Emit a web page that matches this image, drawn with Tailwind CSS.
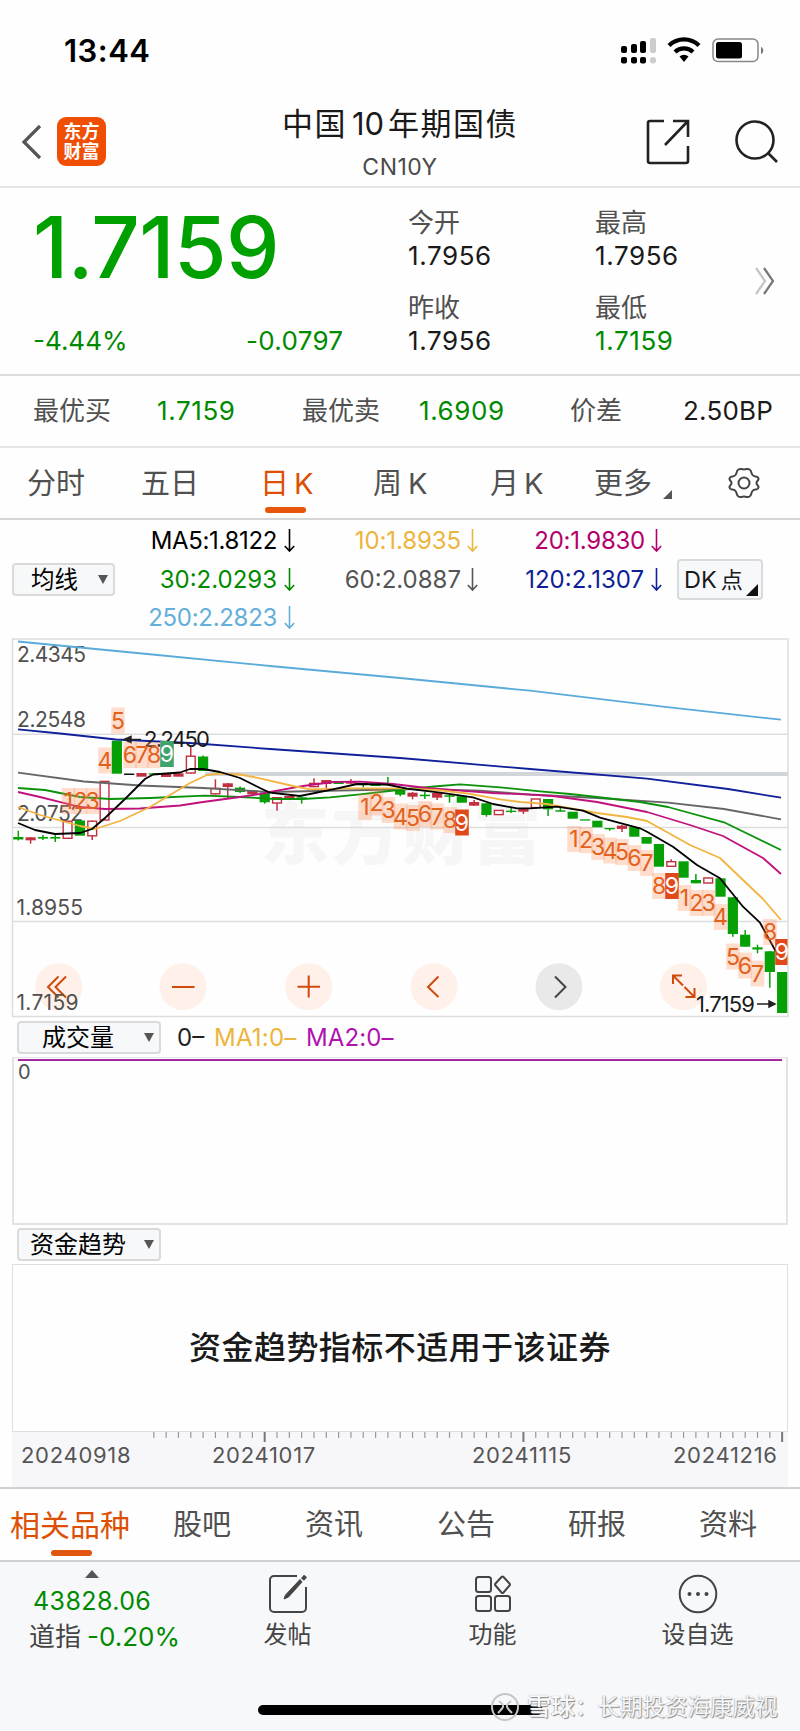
<!DOCTYPE html>
<html lang="zh-CN">
<head>
    <meta charset="UTF-8">
    <meta name="viewport" content="width=device-width, initial-scale=1.0">
    <title>中国10年期国债 CN10Y</title>
    <script src="https://cdn.jsdelivr.net/npm/@tailwindcss/browser@4"></script>
    <style>
        body { font-family: Inter, 'Noto Sans CJK SC', sans-serif; }
    </style>
</head>
<body class="w-[800px] h-[1731px] overflow-hidden bg-[#fefefe] text-[#1a1a1a] leading-none whitespace-nowrap">

    <!-- status bar -->
    <div class="flex h-[102px] items-center pl-[64px] pr-[36px]">
        <span class="mt-[-1px] text-[31px] font-semibold tracking-[0.500px] text-black">13:44</span>
        <svg class="ml-auto" width="143" height="28" viewBox="0 0 143 28">
            <g fill="#000">
                <rect x="0" y="9" width="6" height="7" rx="2"/><rect x="10" y="7" width="6" height="9" rx="2"/><rect x="19" y="4" width="6" height="12" rx="2"/>
                <rect x="0" y="20" width="6" height="6.500" rx="2"/><rect x="10" y="20" width="6" height="6.500" rx="2"/><rect x="19" y="20" width="6" height="6.500" rx="2"/>
            </g>
            <g fill="#ccc"><rect x="29" y="1" width="6" height="15" rx="2"/><rect x="29" y="20" width="6" height="6.500" rx="3"/></g>
            <g fill="none" stroke="#000" stroke-width="4.200"><path d="M48 8.500a21.500 21.500 0 0 1 30 0"/><path d="M54 15a13 13 0 0 1 18 0"/></g>
            <path d="M58.500 19.500a6.500 6.500 0 0 1 9 0L63 25z" fill="#000"/>
            <rect x="92" y="2" width="45" height="22.500" rx="5" fill="none" stroke="#888" stroke-width="1.500"/>
            <rect x="95" y="5" width="26" height="16.500" rx="2.500" fill="#000"/>
            <path d="M140 10c3 1 3 6 0 7z" fill="#777"/>
        </svg>
    </div>

    <!-- title bar -->
    <div class="grid h-[86px] grid-cols-[200px_400px_200px] border-b-2 border-[#e4e4e4]">
        <div class="flex items-center gap-[15px] pl-[21px] pb-[5px]">
            <svg width="21" height="36" viewBox="0 0 21 36" fill="none" stroke="#555" stroke-width="3.200"><path d="M19 2 3 18l16 16"/></svg>
            <div class="flex size-[49px] flex-col items-center justify-center rounded-[9px] bg-[#f04e05] text-[18px] leading-[20px] font-bold text-white"><span>东方</span><span>财富</span></div>
        </div>
        <div class="flex flex-col items-center">
            <h1 class="mt-[6px] text-[31px] leading-[32px] tracking-[1.500px]">中国<span class="mr-[4px] ml-[5px] text-[31px] tracking-[0px]">10</span>年期国债</h1>
            <span class="mt-[15px] text-[23px] leading-[24px] tracking-[0.500px] text-[#4a4a4a]">CN10Y</span>
        </div>
        <div class="flex items-center gap-[44px] pb-[4px] pl-[45px]">
            <svg width="46" height="46" viewBox="0 0 46 46" fill="none" stroke="#222" stroke-width="2.600"><path d="M19 2H5a2 2 0 0 0-2 2v38a2 2 0 0 0 2 2h36a2 2 0 0 0 2-2V27M28 2h15v16M43 2 20 26"/></svg>
            <svg width="44" height="46" viewBox="0 0 44 46" fill="none" stroke="#222" stroke-width="2.600"><circle cx="20" cy="21" r="18.500"/><path d="m33 34 9 9"/></svg>
        </div>
    </div>

    <!-- quote -->
    <div class="grid h-[188px] grid-cols-[375px_187px_168px_70px] border-b-2 border-[#dcdcdc] pl-0">
        <div class="pl-[30px]">
            <div class="mt-[17px] ml-[3px] text-[85px] leading-[86px] font-medium tracking-[-0.600px] text-[#00a000]">1.7159</div>
            <div class="mt-[37px] flex pl-[3px] text-[26px] leading-[26px] text-[#008a00]"><span class="w-[213px]">-4.44%</span><span class="tracking-[0.300px]">-0.0797</span></div>
        </div>
        <dl class="pl-[33px] text-[26px]">
            <dt class="mt-[21px] text-[26px] leading-[28px] text-[#505050]">今开</dt><dd class="mt-[5px] leading-[28px] tracking-[0.600px]">1.7956</dd>
            <dt class="mt-[24px] text-[26px] leading-[28px] text-[#505050]">昨收</dt><dd class="mt-[5px] leading-[28px] tracking-[0.600px]">1.7956</dd>
        </dl>
        <dl class="pl-[33px] text-[26px]">
            <dt class="mt-[21px] text-[26px] leading-[28px] text-[#505050]">最高</dt><dd class="mt-[5px] leading-[28px] tracking-[0.600px]">1.7956</dd>
            <dt class="mt-[24px] text-[26px] leading-[28px] text-[#505050]">最低</dt><dd class="mt-[5px] leading-[28px] tracking-[0.600px] text-[#008a00]">1.7159</dd>
        </dl>
        <svg class="mt-[79px] ml-[24px]" width="22" height="28" viewBox="0 0 22 28" fill="none" stroke-width="2.200"><path d="m2 1 9 13-9 13" stroke="#c4c4c4"/><path d="m10 1 9 13-9 13" stroke="#777"/></svg>
    </div>

    <!-- best bid / ask -->
    <div class="grid h-[72px] grid-cols-[124px_145px_117px_151px_113px_117px] items-center border-b-2 border-[#e6e6e6] pl-[33px] text-[26px] text-[#505050]">
        <span>最优买</span><span class="tracking-[0.600px] text-[#008a00]">1.7159</span>
        <span>最优卖</span><span class="tracking-[0.600px] text-[#008a00]">1.6909</span>
        <span>价差</span><span class="tracking-[0.200px] text-[#1a1a1a]">2.50BP</span>
    </div>

    <!-- period tabs -->
    <div class="flex h-[72px] items-center border-b-2 border-[#d6d6d6] text-[29px] text-[#505050]">
        <span class="w-[114px] pl-[27px]">分时</span>
        <span class="w-[116px] pl-[27px]">五日</span>
        <span class="relative w-[115px] pl-[30px] text-[#dd4f05]">日<span class="ml-[5px]">K</span><i class="absolute top-[38px] left-[35px] h-[6px] w-[41px] rounded-full bg-[#e8560c]"></i></span>
        <span class="w-[117px] pl-[28px]">周<span class="ml-[6px]">K</span></span>
        <span class="w-[104px] pl-[28px]">月<span class="ml-[5px]">K</span></span>
        <span class="w-[97px] pl-[28px]">更多</span>
        <svg class="mt-[22px]" width="9" height="9"><path d="M9 0v9H0z" fill="#555"/></svg>
        <svg class="ml-[55px]" width="34" height="32" viewBox="0 0 34 32" fill="none" stroke="#444" stroke-width="2">
            <path d="M11.500 2.500C13.500 1 14 2.500 17 2.500S20.500 1 22.500 2.500C25 4 23.500 5.500 25.500 8S29.500 8.500 31 10.500C33 13.500 29.500 13 29.500 16S33 18.500 31 21.500C29.500 23.500 27.500 21.500 25.500 24S25 28 22.500 29.500C20.500 31 20 29.500 17 29.500S13.500 31 11.500 29.500C9 28 10.500 26.500 8.500 24S4.500 23.500 3 21.500C1 18.500 4.500 19 4.500 16S1 13.500 3 10.500C4.500 8.500 6.500 10.500 8.500 8S9 4 11.500 2.500Z"/><circle cx="17" cy="16" r="5.500"/></svg>
    </div>

    <!-- moving averages -->
    <div class="flex h-[117px] items-start text-[24px]">
        <button class="mt-[43px] ml-[12px] flex h-[33px] w-[103px] items-center justify-between rounded-[4px] border-2 border-[#d8dadc] bg-[#f7f8fa] pr-[5px] pl-[17px]"><span class="text-[23.500px] text-black">均线</span><svg width="10" height="9"><path d="M0 0h10L5 9z" fill="#555"/></svg></button>
        <div class="grid w-[180px] grid-rows-3 justify-items-end pt-[2px]">
            <div class="ma flex h-[38.500px] items-center gap-[7px] text-black"><span class="tracking-[-0.350px]">MA5:1.8122</span></div>
            <div class="ma flex h-[38.500px] items-center gap-[7px] text-[#008a00]"><span>30:2.0293</span></div>
            <div class="ma flex h-[38.500px] items-center gap-[7px] text-[#64afd9]"><span class="tracking-[-0.300px]">250:2.2823</span></div>
        </div>
        <div class="grid w-[183px] justify-items-end pt-[2px]">
            <div class="ma flex h-[38.500px] items-center gap-[6px] text-[#ecb53c]"><span class="tracking-[-0.100px]">10:1.8935</span></div>
            <div class="ma flex h-[38.500px] items-center gap-[6px] text-[#555]"><span>60:2.0887</span></div>
        </div>
        <div class="grid w-[184px] justify-items-end pt-[2px]">
            <div class="ma flex h-[38.500px] items-center gap-[6px] text-[#b3006b]"><span class="tracking-[-0.250px]">20:1.9830</span></div>
            <div class="ma flex h-[38.500px] items-center gap-[7px] text-[#0f1f96]"><span>120:2.1307</span></div>
        </div>
        <button class="mt-[39px] ml-[15px] flex h-[41px] w-[86px] items-center rounded-[4px] border-2 border-[#d8dadc] bg-[#f7f8fa] pl-[5px]"><span class="text-[23.500px]">DK</span><span class="ml-[4px] text-[22px]">点</span><svg class="mt-[20px] ml-[3px]" width="12" height="12"><path d="M12 0v12H0z" fill="#111"/></svg></button>
    </div>

    <!-- daily candles, drawn in page pixels: y runs from 637 to 1018 -->
    <svg id="chart" class="block" width="800" height="381" viewBox="0 637 800 381">
        <text x="401" y="859" text-anchor="middle" font-size="68" font-weight="900" textLength="280" fill="#f6f6f6">东方财富</text>
        <g stroke="#dcdddf" stroke-width="1.500" fill="none"><rect x="12.500" y="639" width="775.500" height="377.500"/><path d="M12 734.300h776M12 827.500h776M12 921.500h776"/></g>
        <path d="M205 774h583" stroke="#d2d5da" stroke-width="4"/>
        <g id="tools" fill="none" stroke="#cf4a0b" stroke-width="2">
            <g fill="#fff0e9" stroke="none"><circle cx="58.800" cy="986.700" r="23.500"/><circle cx="183" cy="986.700" r="23.500"/><circle cx="308.700" cy="986.700" r="23.500"/><circle cx="434" cy="986.700" r="23.500"/><circle cx="683.500" cy="986.700" r="23.500"/><circle cx="559" cy="986.700" r="23.500" fill="#e9e9e9"/></g>
            <path d="m58.500 976.500-10.500 10.500 10.500 10.500M66 976.500l-10.500 10.500 10.500 10.500M172 987h22.500M297.500 986.700h22.500M308.700 975.500v22M438.500 976.500l-10.500 10.500 10.500 10"/>
            <path d="m555 976.500 10.500 10.500-10.500 10.500" stroke="#444"/>
            <path d="M673 984v-8.500h9M673.500 976l9.500 9.500M685.500 997h9v-9M694 996.500l-9.500-9.500"/>
        </g>
        <g font-size="21" fill="#505050"><text x="17" y="661.500" textLength="69">2.4345</text><text x="17" y="727" textLength="69">2.2548</text><text x="17" y="821" textLength="66">2.0752</text><text x="16.500" y="915" textLength="66.500">1.8955</text><text x="16.500" y="1010" textLength="62">1.7159</text></g>
        <g id="candles"></g>
        <g id="lines" fill="none" stroke-width="1.800" stroke-linejoin="round"></g>
        <g font-size="22" fill="#1a1a1a"><text x="144" y="747" textLength="66">2.2450</text><text x="696" y="1012" textLength="59">1.7159</text></g>
        <g stroke="#222" stroke-width="1.500" fill="#222"><path d="M141 739.500h-14M131 736.500l-7 3 7 3zM757 1004h14M769 1001l6 3-6 3z"/></g>
        <g id="marks" font-size="23" text-anchor="middle"></g>
    </svg>

    <!-- volume -->
    <div class="flex h-[39px] items-center pb-0 text-[24px]">
        <button class="ml-[17px] flex h-[33px] w-[144px] items-center justify-between rounded-[4px] border-2 border-[#d8dadc] bg-[#f7f8fa] pr-[5px] pl-[23px]"><span class="text-[24px] text-black">成交量</span><svg width="10" height="9"><path d="M0 0h10L5 9z" fill="#555"/></svg></button>
        <span class="ml-[16px] w-[37px] text-[#222]">0–</span><span class="w-[92px] tracking-[0.200px] text-[#ecb53c]">MA1:0–</span><span class="tracking-[0.100px] text-[#b012b0]">MA2:0–</span>
    </div>
    <div class="mx-[12px] h-[168px] border-2 border-t border-[#e2e3e5] pl-[4px] pr-[4px]">
        <div class="h-[3px] border-b-2 border-[#a02aa0]"></div>
        <div class="mt-[1px] text-[20px] text-[#505050]">0</div>
    </div>

    <!-- fund trend -->
    <div class="flex h-[39px] items-center">
        <button class="ml-[17px] flex h-[33px] w-[144px] items-center justify-between rounded-[4px] border-2 border-[#d8dadc] bg-[#f7f8fa] pr-[5px] pl-[11px]"><span class="text-[24px] text-black">资金趋势</span><svg width="10" height="9"><path d="M0 0h10L5 9z" fill="#555"/></svg></button>
    </div>
    <div class="mx-[12px] flex h-[168px] items-center justify-center border-[1.500px] border-[#dedfe1] text-[32px] font-medium tracking-[0.450px] text-[#1a1a1a]">资金趋势指标不适用于该证券</div>
    <div class="mx-[12px] h-[55px] bg-[#f7f7fa]">
        <svg id="ticks" class="block" width="776" height="12" viewBox="12 0 776 12" stroke="#aaa"></svg>
        <div class="flex text-[22px] leading-[22px] tracking-[0.700px] text-[#555]"><span class="w-[191px] pl-[9px]">20240918</span><span class="w-[260px] pl-[9px]">20241017</span><span class="w-[202px] pl-[9px]">20241115</span><span class="pl-[8px]">20241216</span></div>
    </div>

    <!-- related content tabs -->
    <div class="flex h-[75px] items-center border-y-2 border-[#cfd1d4] text-[29px] text-[#505050]">
        <span class="relative w-[173px] pl-[10px] text-[30px] text-[#dd4f05]">相关品种<i class="absolute top-[40px] left-[51px] h-[6px] w-[41px] rounded-full bg-[#e0560f]"></i></span>
        <span class="w-[132px]">股吧</span><span class="w-[132px]">资讯</span><span class="w-[131px]">公告</span><span class="w-[131px]">研报</span><span>资料</span>
    </div>

    <!-- bottom bar -->
    <div class="relative h-[171px] bg-[#f7f8fa]">
        <div class="grid h-[92px] grid-cols-[185px_205px_205px_205px] text-[24px] text-[#444]">
            <div class="pl-[29px]">
                <svg class="mt-[8px] ml-[56px]" width="14" height="8"><path d="M7 0 14 8H0z" fill="#555"/></svg>
                <div class="mt-[10px] ml-[4px] text-[25px] leading-[26px] tracking-[0.400px] text-[#008a00]">43828.06</div>
                <div class="mt-[10px] flex items-center text-[26px] leading-[26px]">道指<span class="ml-[6px] text-[#008a00]">-0.20%</span></div>
            </div>
            <div class="flex flex-col items-center pt-[12px]">
                <svg width="40" height="40" viewBox="0 0 40 40" fill="none" stroke="#444" stroke-width="2"><path d="M29 2H6a4 4 0 0 0-4 4v28a4 4 0 0 0 4 4h28a4 4 0 0 0 4-4V13"/><path d="m16 25 4.500-2L34 8l-2-2.500L17.500 21z" fill="#444" stroke-width="1"/><path d="m34.500 5.500 3-3.500" stroke-width="4"/></svg>
                <span class="mt-[9px]">发帖</span>
            </div>
            <div class="flex flex-col items-center pt-[12px]">
                <svg width="38" height="40" viewBox="0 0 38 40" fill="none" stroke="#444" stroke-width="2"><rect x="2" y="3" width="15" height="15" rx="2.500"/><rect x="2" y="22" width="15" height="15" rx="2.500"/><rect x="21" y="22" width="15" height="15" rx="2.500"/><path d="M27.500 3q1-1 2 0l6 6.500q1 1 0 2l-6 7q-1 1-2 0l-6-7q-1-1 0-2z"/></svg>
                <span class="mt-[9px]">功能</span>
            </div>
            <div class="flex flex-col items-center pt-[12px]">
                <svg width="40" height="40" viewBox="0 0 40 40" fill="none" stroke="#444" stroke-width="2"><circle cx="20" cy="20" r="18.300"/><g fill="#444" stroke="none"><circle cx="11.500" cy="20" r="2"/><circle cx="20" cy="20" r="2"/><circle cx="28.500" cy="20" r="2"/></g></svg>
                <span class="mt-[9px]">设自选</span>
            </div>
        </div>
        <div class="mt-[51px] ml-[258px] h-[10px] w-[285px] rounded-full bg-black"></div>
        <div class="absolute top-[130px] left-[490px] flex items-center gap-[7px] text-[22.500px] text-[#f7f8fa] [text-shadow:1px_1px_1px_#888,-0.500px_-0.500px_1px_#aaa]">
            <svg width="30" height="30" viewBox="0 0 30 30" fill="none" stroke="#c5c5c5" stroke-width="2"><circle cx="15" cy="15" r="13"/><path d="M9 9q5 4 4 6t-5 6M21 9q-5 4-4 6t5 6"/></svg>
            <span><b class="text-[24px] font-medium">雪球</b>：长期投资海康威视</span>
        </div>
    </div>

    <script>
        const NS = 'http://www.w3.org/2000/svg';
        const STEP = 12.32, X0 = 18.3;
        const GREEN = '#06a006', RED = '#c03040';

        function add(parent, tag, attrs, text) {
            const el = document.createElementNS(NS, tag);
            for (const k in attrs) el.setAttribute(k, attrs[k]);
            if (text) el.textContent = text;
            parent.appendChild(el);
        }

        // kind (g = down, r = up, h = hollow up, k = flat), body top, body bottom, high, low
        const candles = [
            ['g',837,839.5,830.7,840.5],['r',837.3,840.3,837,843.7],['g',837,838.6,835,840],['g',837,838.6,835,842],['h',820.5,839],
            ['g',820.5,835.7],['h',820.5,836.5,820.5,840],['h',780.7,820.7],['g',740.7,773.7],['k',773.5,775],
            ['r',773,776.7],['g',773.3,774.7],['r',773.3,777],['r',773.3,776.7],['h',755.5,773.7,746.7,773.7],
            ['g',756.5,771,755.5,771],['h',787.7,794.5,779.3,794.5],['r',783.3,787,783,798],['g',787.7,792,786.5,793],['r',790.3,794.3,790,796],
            ['g',792.5,802.3,792,803.7],['h',797,803.7,797,810.7],['r',796,798.3],['g',797.3,799,797,803.7],['h',782.7,787.3,778.3,787.3],
            ['r',780,784,780,788.7],['g',782,784],['r',781.7,783.7,779,784],['g',783,784.7,783,787.3],['g',784.7,786],
            ['g',784,785.3,777,785.3],['g',789.3,794.7,789,796.3],['r',792.7,796.7,792,799.3],['g',794.7,796.2,791.7,799],['r',793,797.7,793,800],
            ['g',795.3,796.8,795,802.7],['g',796.3,802.7],['r',802,805.7,800,805.7],['g',803.3,815,803,816.7],['h',809.7,815.3],
            ['g',810.7,812,808,813],['h',809,811.7,809,814],['h',798.3,808.3],['g',799,809.3,799,816],['g',810.3,811.7,807.3,811.7],
            ['g',811.7,818.7],['g',819.3,820.6],['g',820.7,827.3],['g',828,829.3,828,830.7],['r',825.7,828.9,825,832],
            ['g',827,836.7],['g',837,843.7],['g',844,866.7],['h',861,867,859.3,861],['g',861.3,877.7],
            ['g',880,883.3,874,883.3],['h',877.3,883.7],['g',878.3,896.7],['g',897.3,934,897,936.7],['g',934.7,946.7,930,946.7],
            ['g',947.3,949.5,944.7,953.3],['g',951.3,972,951,987.7],['g',972,1013]
        ];
        const candleLayer = document.getElementById('candles');
        candles.forEach(([kind, top, bottom, high, low], i) => {
            const x = X0 + i * STEP;
            const color = kind === 'g' ? GREEN : kind === 'k' ? '#111' : RED;
            if (high) add(candleLayer, 'path', { d: `M${x} ${high}V${low}`, stroke: color, 'stroke-width': 1.5 });
            const hollow = kind === 'h';
            const inset = hollow ? 0.7 : 0;
            add(candleLayer, 'rect', {
                x: x - 5.1 + inset, y: top + inset, width: 10.2 - inset * 2, height: bottom - top - inset * 2,
                fill: hollow ? '#fff' : color, stroke: hollow ? color : 'none', 'stroke-width': 1.4
            });
        });

        const averages = {
            '#5aabda': [[18,641.5],[142,653.5],[270,666],[400,678],[530,690.7],[663,706.7],[781,719.7]],
            '#10209a': [[18,729.3],[60,733.5],[116,739.5],[190,743],[270,749],[400,758],[530,769],[647,778.7],[728,789],[781,797.7]],
            '#666': [[18,772.7],[84,781.5],[140,785.5],[203,788],[270,792],[340,790.5],[420,789],[480,790.7],[530,794.5],[597,798],[668,802.7],[724,809],[781,819.3]],
            '#0a920a': [[18,788],[45,790],[80,797],[110,799],[150,798],[205,795.7],[240,797],[275,799],[303,799],[330,797.3],[360,794.3],[407,789],[440,786],[460,784.3],[500,787.3],[540,791.3],[570,794],[597,797],[640,802],[668,807],[724,822.3],[781,850]],
            '#c0107c': [[18,792],[40,797],[80,807],[105,809],[140,808.5],[180,805.5],[203,802],[240,797],[260,794],[277,790.7],[303,786],[333,782],[360,781.7],[393,784],[427,788],[460,790.7],[493,793],[530,794.7],[553,796],[597,802],[647,812],[690,825],[723,836],[763,858],[781,874]],
            '#f2b440': [[18,807],[40,815],[80,826],[95,829],[120,821],[150,807],[190,783],[207,775],[220,773.5],[240,774.5],[260,778.3],[293,786],[310,789.3],[347,788.3],[400,788.3],[437,790],[467,793.3],[500,799.3],[520,802],[547,804],[563,807],[597,813],[627,817],[647,821],[690,845],[720,858],[743,880],[763,899],[781,920]],
            '#000': [[18,823],[35,830],[55,834],[80,833],[92,829],[105,818],[125,799],[145,779],[153,774.5],[180,772.5],[190,769],[203,769],[220,772],[240,778],[260,788],[270,792.7],[300,796],[333,789.3],[357,784],[387,784.5],[407,788.7],[440,792.7],[473,797.3],[493,804],[517,808.3],[530,808.3],[557,806.7],[583,810.7],[600,817.7],[640,828.3],[647,831.7],[673,846.7],[697,865],[720,878.3],[743,906.7],[760,922.7],[776,951.7]]
        };
        const lineLayer = document.getElementById('lines');
        for (const color in averages) add(lineLayer, 'polyline', { points: averages[color].join(' '), stroke: color });

        // nine-turn counts: digit, centre x, box top, optional filled box colour
        const marks = [
            ['1',68.5,788],['2',80.5,788],['3',92.7,788],['4',105,747.5],['5',118,707.5],['6',130,742],['7',142,742],['8',154,742],['9',167,741,'#3fa46c'],
            ['1',365,794],['2',376.5,789.5],['3',388.5,797],['4',400.5,803.5],['5',413,805],['6',425,801],['7',437,803.5],['8',450,807],['9',462,809.5,'#e04a1a'],
            ['1',574,826],['2',586,827],['3',598,834],['4',610,837.5],['5',622,839],['6',634.5,845],['7',647,850],['8',659,873],['9',672,873,'#e04a1a'],
            ['1',684.5,885],['2',696.5,890],['3',708.7,890],['4',720.5,904],['5',733,943.5],['6',745,952.5],['7',757.5,960.5],['8',770,919],['9',782,939,'#e04a1a']
        ];
        const markLayer = document.getElementById('marks');
        marks.forEach(([digit, x, top, fill]) => {
            const left = x - 6.8;
            add(markLayer, 'rect', { x: left, y: top, width: Math.min(13.6, 787.5 - left), height: 26, fill: fill || '#ff8a50', 'fill-opacity': fill ? 1 : 0.28 });
        });
        marks.forEach(([digit, x, top, fill]) => add(markLayer, 'text', { x, y: top + 21, fill: fill ? '#fff' : '#e2611c' }, digit));

        const ticks = document.getElementById('ticks');
        for (let i = 11; i < 63; i++) {
            const major = i === 20 || i === 41 || i === 62;
            add(ticks, 'path', { d: `M${X0 + i * STEP} 0V${major ? 10 : 6}`, stroke: major ? '#777' : '#999', 'stroke-width': major ? 2 : 1.2 });
        }

        document.querySelectorAll('.ma').forEach(row => {
            row.insertAdjacentHTML('beforeend', '<svg width="11" height="24" viewBox="0 0 11 24" fill="none" stroke="currentColor" stroke-width="1.600"><path d="M5.500 0v22M.8 17l4.700 5 4.700-5"/></svg>');
        });
    </script>
</body>
</html>
